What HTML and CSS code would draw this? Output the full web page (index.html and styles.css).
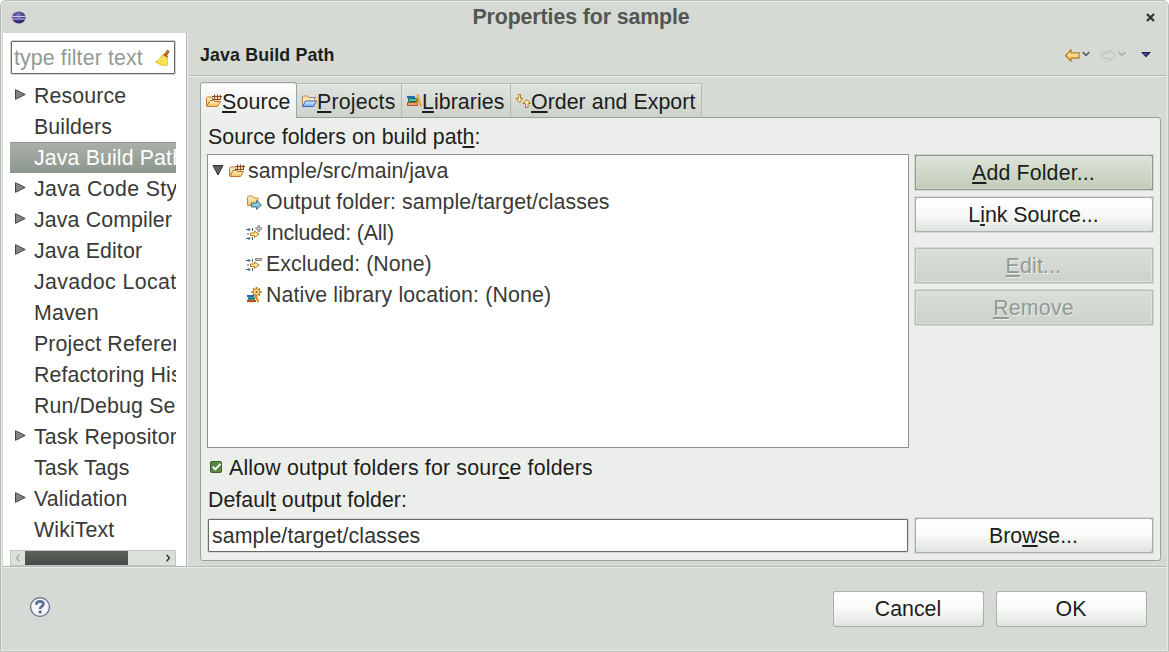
FILE: index.html
```html
<!DOCTYPE html>
<html lang="en">
<head>
<meta charset="utf-8">
<title>Properties for sample</title>
<link rel="stylesheet" href="styles.css">
</head>
<body>
<svg class="defs" width="0" height="0">
  <defs>
    <linearGradient id="gold" x1="0" y1="0" x2="0" y2="1"><stop offset="0" stop-color="#fff3cc"/><stop offset="1" stop-color="#f2bf58"/></linearGradient>
    <linearGradient id="blue" x1="0" y1="0" x2="0" y2="1"><stop offset="0" stop-color="#e0efff"/><stop offset="1" stop-color="#78abee"/></linearGradient>
    <radialGradient id="ball" cx=".45" cy=".3" r=".75"><stop offset="0" stop-color="#7d80c4"/><stop offset=".5" stop-color="#453f8e"/><stop offset="1" stop-color="#201c58"/></radialGradient>
    <symbol id="pkg" viewBox="0 0 16 16">
      <path d="M.5 12.5V5.500l1-1.500h4l1 1.500h4v7z" fill="url(#gold)" stroke="#bd7a30"/>
      <path d="M7 2h7v6H7z" fill="#f6e3c4"/>
      <path d="M8.500 1.500v6M11.500 1.500v6M14.500 2v5M6 3.500h10M6 6.500h9" stroke="#8c4a20" fill="none"/>
      <path d="M1 13.500l3-6h3.500l1 1h6L11.500 13.500z" fill="url(#gold)" stroke="#bd7a30"/>
    </symbol>
    <symbol id="prj" viewBox="0 0 16 16">
      <path d="M1.500 12.500v-8l1-1.500h4l1 1.500h6v4" fill="#fbe6ad" stroke="#b98b45"/>
      <path d="M0 4.500h2M8 4.500h7.500" stroke="#8790bb"/>
      <path d="M1.500 13.500l3-5.500h11L12.500 13.500z" fill="url(#blue)" stroke="#3b63c0"/>
    </symbol>
    <symbol id="lib" viewBox="0 0 16 16">
      <path d="M1 4h8" stroke="#2368bd" stroke-width="2"/>
      <path d="M2.500 5.500h8v3h-8z" fill="#55c19a" stroke="#087458"/>
      <path d="M1.500 9.500h10v3h-10z" fill="#e2a37d" stroke="#bb4e26"/>
      <path d="M11.500 1.500l3.500 11.500M11.500 4v7" stroke="#e98b06" stroke-width="1.800"/><path d="M12.200 3l2.400 8" stroke="#ffd149" stroke-width=".7"/>
    </symbol>
    <symbol id="order" viewBox="0 0 16 16">
      <path d="M3.500 1.500h2v4h2L4.500 9.500 1 5.500h2.500z" fill="#fff3bb" stroke="#b87a17"/>
      <path d="M10.500 14.500h2.500v-4h2.500L11.700 6.500 8 10.500h2.500z" fill="#fff3bb" stroke="#b87a17"/>
    </symbol>
    <symbol id="out" viewBox="0 0 16 16">
      <path d="M1.500 11.500v-8l1-1.500h4l1.500 2h4v7.500z" fill="url(#gold)" stroke="#c68a3a"/>
      <path d="M5.500 9h5V6.500L15.500 11l-5 4.500V13h-5z" fill="#91c5dd" stroke="#3b7396"/>
    </symbol>
    <symbol id="filt" viewBox="0 0 16 16">
      <path d="M0 4.500h4M0 13.500h4M2.500 3L4 4.500 2.500 6M2.500 12L4 13.500 2.500 15M6.500 3v3M6.500 12v3M1 9h2" stroke="#3d6284" fill="none"/>
      <path d="M4.500 8h4V6L13 9l-4.500 3.500v-2h-4z" fill="#fff0a8" stroke="#bd7b18"/>
    </symbol>
    <symbol id="native" viewBox="0 0 16 16">
      <path d="M10.500 0v10M5.500 5h10M7 1.500l7 7M14 1.500l-7 7" stroke="#b07a25" stroke-width="1.800"/>
      <circle cx="10.500" cy="5" r="3" fill="#f9dda0" stroke="#c08a30" stroke-width=".8"/><circle cx="10.500" cy="5" r="1" fill="#6b5a3a"/>
      <path d="M1 9h7" stroke="#2368bd" stroke-width="2"/><path d="M2 11.500h7" stroke="#0c806a" stroke-width="2.500"/><path d="M1 14h9" stroke="#bd4b20" stroke-width="2.200"/>
      <path d="M9 8l3.500 7" stroke="#ef8411" stroke-width="2"/>
    </symbol>
    <symbol id="tri" viewBox="0 0 11 11"><path d="M.5 .7v9.600l9.700-4.800z" fill="#858585" stroke="#434343"/></symbol>
  </defs>
</svg>
<div class="window">
  <header class="titlebar">
    <svg class="logo" viewBox="0 0 15 13"><ellipse cx="6" cy="6.500" rx="6" ry="6" fill="#dcaacb"/><ellipse cx="8" cy="6.500" rx="6.500" ry="6" fill="url(#ball)"/><path d="M1.500 5.500h13M1.500 8h13" stroke="#c1cdea"/></svg>
    <h1>Properties for sample</h1>
    <svg class="close" viewBox="0 0 9 9"><path d="M1 1l7 7M8 1L1 8" stroke="#303331" stroke-width="2.300"/></svg>
  </header>
  <div class="main">
    <aside class="side">
      <div class="search"><span>type filter text</span>
        <svg viewBox="0 0 16 17"><path d="M13.500 1.500L10 7" stroke="#8f4d16" stroke-width="3"/><path d="M13.500 1.500L10 7" stroke="#d99a42" stroke-width="1"/><path d="M7.500 5.500l5 3.500-.5 7.500-6-.5-5.500-3c3-1.500 5.500-4 7-7.500z" fill="#f8dc35" stroke="#d9ad16" stroke-width=".7"/><path d="M8 8l-4 5M10 9l-3 6M11.500 10l-1.500 6" stroke="#fff6a0"/><path d="M8.500 5l4.500 3" stroke="#c24a1c" stroke-width="1.500"/></svg>
      </div>
      <ul class="nav">
        <li><svg><use href="#tri"/></svg><span>Resource</span></li>
        <li><span>Builders</span></li>
        <li class="on"><span>Java Build Path</span></li>
        <li class="wide"><svg><use href="#tri"/></svg><span>Java Code Style</span></li>
        <li><svg><use href="#tri"/></svg><span>Java Compiler</span></li>
        <li><svg><use href="#tri"/></svg><span>Java Editor</span></li>
        <li class="wide"><span>Javadoc Location</span></li>
        <li><span>Maven</span></li>
        <li><span>Project References</span></li>
        <li><span>Refactoring History</span></li>
        <li><span>Run/Debug Settings</span></li>
        <li><svg><use href="#tri"/></svg><span>Task Repository</span></li>
        <li><span>Task Tags</span></li>
        <li><svg><use href="#tri"/></svg><span>Validation</span></li>
        <li><span>WikiText</span></li>
      </ul>
      <div class="scroll">
        <svg viewBox="0 0 15 14"><path d="M9 3.500L6 7l3 3.500" stroke="#a2a8a3" stroke-width="1.500" fill="none"/></svg>
        <div class="thumb"></div>
        <svg viewBox="0 0 15 14"><path d="M6 3.500L9 7l-3 3.500" stroke="#3a3f3b" stroke-width="1.700" fill="none"/></svg>
      </div>
    </aside>
    <section class="page">
      <div class="pagehead">
        <h2>Java Build Path</h2>
        <div class="tools">
          <svg class="arrow" viewBox="0 0 15 13"><path d="M.7 6.500L6 .8v3h8v5.400H6v3z" fill="url(#gold)" stroke="#b87a12" stroke-width="1.200"/></svg>
          <svg class="chev" viewBox="0 0 8 6"><path d="M.7 1.200L4 4.300l3.300-3.100" stroke="#5d625e" stroke-width="1.700" fill="none"/></svg>
          <svg class="arrow fwd" viewBox="0 0 15 13"><path d="M14.300 6.500L9 .8v3H1v5.400h8v3z" fill="#d9ddd8" stroke="#b9bdb8"/></svg>
          <svg class="chev" viewBox="0 0 8 6"><path d="M.7 1.200L4 4.300l3.300-3.100" stroke="#a9afa9" stroke-width="1.700" fill="none"/></svg>
          <svg class="menu" viewBox="0 0 10 6"><path d="M0 0h10L5 5.500z" fill="#262347"/><path d="M2 1h5L5 4z" fill="#4b4797"/></svg>
        </div>
      </div>
      <div class="tabs">
        <div class="tab on"><svg><use href="#pkg"/></svg><span><u>S</u>ource</span></div>
        <div class="tab t2"><svg><use href="#prj"/></svg><span><u>P</u>rojects</span></div>
        <div class="tab t3"><svg><use href="#lib"/></svg><span><u>L</u>ibraries</span></div>
        <div class="tab t4"><svg><use href="#order"/></svg><span><u>O</u>rder and Export</span></div>
      </div>
      <div class="panel">
        <div class="label first">Source folders on build pat<u>h</u>:</div>
        <div class="cols">
          <ul class="tree">
            <li class="root"><svg class="down" viewBox="0 0 12 11"><path d="M1 .5h10L6 10z" fill="#606060" stroke="#333"/></svg><svg class="ic"><use href="#pkg"/></svg><span>sample/src/main/java</span></li>
            <li><svg class="ic"><use href="#out"/></svg><span>Output folder: sample/target/classes</span></li>
            <li class="tight"><svg class="ic" viewBox="0 0 16 16"><use href="#filt"/><path d="M9.500 3.500h6.500M12.800 .2v6.500" stroke="#8a8a8a" stroke-width="2.600"/><path d="M10.500 3.500h4.500M12.800 1.200v4.500" stroke="#d5d5d5" stroke-width=".8"/></svg><span>Included: (All)</span></li>
            <li><svg class="ic" viewBox="0 0 16 16"><use href="#filt"/><path d="M9.500 2.500h6v2h-6z" fill="#c8c8c8" stroke="#8a8a8a"/></svg><span>Excluded: (None)</span></li>
            <li class="loose"><svg class="ic"><use href="#native"/></svg><span>Native library location: (None)</span></li>
          </ul>
          <div class="btns">
            <button class="btn focus"><span><u>A</u>dd Folder...</span></button>
            <button class="btn"><span>L<u>i</u>nk Source...</span></button>
            <button class="btn off gap"><span><u>E</u>dit...</span></button>
            <button class="btn off"><span><u>R</u>emove</span></button>
          </div>
        </div>
        <div class="check">
          <svg viewBox="0 0 13 13"><rect x=".5" y=".5" width="12" height="12" rx="1.500" fill="#5b8640" stroke="#34541f"/><path d="M3 6l2.700 3L11.500 3" stroke="#fff" stroke-width="2" fill="none"/></svg>
          <span>Allow output folders for sour<u>c</u>e folders</span>
        </div>
        <div class="label second">Defaul<u>t</u> output folder:</div>
        <div class="outrow">
          <div class="input">sample/target/classes</div>
          <button class="btn"><span>Bro<u>w</u>se...</span></button>
        </div>
      </div>
    </section>
  </div>
  <footer class="foot">
    <svg class="help" viewBox="0 0 20 20"><circle cx="10" cy="10" r="9.400" fill="#f3f5f9" stroke="#5a6a8e" stroke-width="1.200"/><path d="M6.300 7.800C6.300 3.200 13.800 3.500 13.500 7.200c-.2 2.300-3.400 2.200-3.400 4.800" stroke="#5a6d9a" stroke-width="2.600" fill="none"/><circle cx="10.100" cy="15" r="1.700" fill="#5a6d9a"/></svg>
    <button class="btn flat"><span>Cancel</span></button>
    <button class="btn flat"><span>OK</span></button>
  </footer>
</div>
</body>
</html>
```
FILE: styles.css
```css
* { box-sizing: border-box; margin: 0; padding: 0; }
html, body { width: 1169px; height: 652px; overflow: hidden; background: #fff; }
body { font: 21.33px/31px "Liberation Sans", Arial, sans-serif; color: #1c1e1c; white-space: nowrap; }
ul { list-style: none; }
svg { display: block; flex: none; }
.defs { position: absolute; }
u { text-decoration: underline; text-decoration-thickness: 2px; text-underline-offset: 2px; text-decoration-skip-ink: none; }

.window { width: 1169px; height: 652px; background: #d5dad4; border: 1px solid #b9beb9; border-radius: 6px 6px 0 0; box-shadow: inset 0 0 0 1px #e6eae5; display: flex; flex-direction: column; padding: 0 2px 1px; }
.titlebar { height: 32px; flex: none; display: flex; align-items: center; padding: 0 11px 0 8px; }
.logo { width: 15px; height: 13px; }
.titlebar h1 { flex: 1; font-size: 21.33px; line-height: 32px; letter-spacing: -.1px; color: #535653; text-align: center; padding-right: 10px; }
.close { width: 9px; height: 9px; margin-top: 1px; }

.main { height: 534px; flex: none; display: flex; border-bottom: 1px solid #b4bab4; }
.side { width: 184px; background: #fff; border-right: 1px solid #b0b6b0; padding: 7px 0 0 7px; flex: none; }
.search { width: 166px; height: 35px; border: 1px solid #cfd5cf; border-radius: 2px; padding: 0 3px; display: flex; align-items: center; justify-content: space-between; color: #929b93; box-shadow: inset 0 0 0 1px #656b66; letter-spacing: .12px; line-height: 33px; }
.search span { padding-top: 1px; }
.search svg { width: 16px; height: 17px; margin-right: 1px; }
.nav { width: 166px; overflow: hidden; margin-top: 5px; height: 470px; color: #383a38; }
.nav li { height: 31px; line-height: 33px; display: flex; padding-left: 5px; letter-spacing: .13px; }
.nav .wide { letter-spacing: .38px; }
.nav svg { width: 11px; height: 11px; margin-top: 9px; }
.nav span { margin-left: 19px; }
.nav svg + span { margin-left: 8px; }
.nav .on { background: linear-gradient(#a9b0a8, #8d978e); border-top: 1px solid #8f9990; color: #fff; line-height: 31px; }
.scroll { width: 166px; height: 16px; background: #dbe0da; border: 1px solid #c1c7c1; display: flex; justify-content: space-between; }
.scroll svg { width: 14px; height: 14px; }
.thumb { width: 103px; height: 14px; background: linear-gradient(#5c635d, #474c48); margin-right: 33px; }

.page { flex: 1; border-left: 1px solid #e9ece8; min-width: 0; }
.pagehead { height: 43px; border-bottom: 1px solid #b4bab4; box-shadow: 0 1px #e9ece8; display: flex; justify-content: space-between; padding: 0 15px 0 12px; }
.pagehead h2 { font-size: 17.8px; line-height: 44px; letter-spacing: .14px; }
.tools { display: flex; align-items: center; }
.arrow { width: 15px; height: 13px; margin-top: 2px; }
.fwd { margin-left: 11px; }
.chev { width: 8px; height: 6px; margin-left: 2px; }
.menu { width: 10px; height: 6px; margin: 2px 0 0 15px; }

.tabs { margin: 6px 0 0 12px; height: 35px; display: flex; align-items: flex-end; position: relative; }
.tab { height: 34px; display: flex; align-items: center; border: 1px solid #b3bab3; border-left: 0; border-bottom: 0; background: linear-gradient(#dfe4de, #cdd3cc); box-shadow: inset 0 1px #e9ece8; padding-left: 4px; line-height: 34px; }
.tab span { padding-top: 2px; }
.tab svg { width: 16px; height: 16px; }
.tab.on { width: 97px; height: 36px; border: 1px solid #9ca59d; border-bottom: 0; border-radius: 3px 3px 0 0; background: linear-gradient(#fbfcfb, #eceeeb); margin-bottom: -1px; padding: 0 0 0 5px; letter-spacing: .15px; }
.t2 { width: 105px; letter-spacing: .18px; }
.t3 { width: 109px; letter-spacing: .07px; }
.t4 { width: 191px; letter-spacing: .05px; }
.panel { margin-left: 12px; width: 961px; height: 444px; background: #eceeeb; border: 1px solid #98a299; border-radius: 0 3px 3px 3px; padding: 0 6px; }
.label.first { height: 36px; line-height: 39px; padding-left: 1px; letter-spacing: .03px; }
.cols { display: flex; gap: 5px; }
.tree { width: 702px; height: 294px; background: #fff; border: 1px solid #8c958d; color: #383a38; }
.tree li { height: 31px; padding-left: 38px; display: flex; align-items: center; letter-spacing: .06px; }
.tree span { padding-top: 2px; }
.tree .tight { letter-spacing: -.17px; }
.tree .loose { letter-spacing: .14px; }
.tree .root { padding-left: 4px; letter-spacing: 0; }
.down { width: 12px; height: 11px; }
.ic { width: 16px; height: 16px; margin-right: 4px; }
.root .ic { margin: 0 3px 0 5px; }
.btns { display: flex; flex-direction: column; }
.btn { width: 240px; height: 37px; border: 1px solid #d3d8d2; background: #aab1aa; border-radius: 0; padding: 1px; font: inherit; color: inherit; }
.btn span { display: block; height: 33px; line-height: 35px; border-radius: 2px; background: linear-gradient(#fff, #f8f9f8 50%, #dfe3de); text-align: center; padding-right: 1px; }
.btn + .btn { margin-top: 5px; }
.btn.gap { margin-top: 14px; }
.focus { background: #8c998a; }
.focus span { background: linear-gradient(#dde4d9, #c3ccb9); box-shadow: inset 0 0 0 1px #e1e8dd88; letter-spacing: .15px; }
.off { background: #b5bdb5; color: #929b93; text-shadow: 1px 1px #eceeeb; }
.off span { background: linear-gradient(#d9ded8, #cdd3cc); box-shadow: inset 0 0 0 1px #dfe4de; letter-spacing: .2px; }
.check { display: flex; align-items: center; height: 38px; padding-left: 3px; letter-spacing: .18px; }
.check span { padding-top: 2px; }
.check svg { width: 12px; height: 12px; margin-right: 7px; }
.label.second { line-height: 29px; height: 31px; padding-left: 1px; letter-spacing: .04px; }
.outrow { display: flex; gap: 5px; }
.input { width: 702px; height: 35px; margin-top: 1px; border: 1px solid #d3d8d2; border-radius: 2px; box-shadow: inset 0 0 0 1px #656b66; background: #fff; line-height: 35px; padding-left: 4px; letter-spacing: .1px; color: #303230; }

.foot { flex: 1; border-top: 1px solid #e9ece8; display: flex; align-items: flex-start; padding: 22px 18px 0 27px; }
.help { width: 20px; height: 20px; margin: 7px auto 0 0; }
.flat { width: 153px; height: 38px; border-color: transparent; background-clip: padding-box; border-radius: 4px; }
.flat span { height: 34px; line-height: 34px; padding-right: 1px; }
.flat.btn + .flat.btn { margin: 0 0 0 10px; }
```
